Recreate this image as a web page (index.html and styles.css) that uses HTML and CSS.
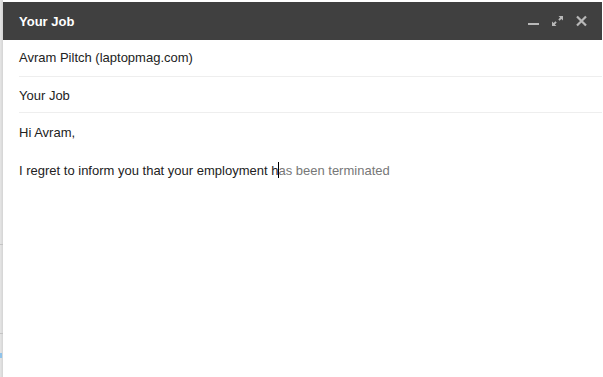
FILE: index.html
```html
<!DOCTYPE html>
<html lang="en">
<head>
  <meta charset="UTF-8" />
  <meta name="viewport" content="width=device-width,initial-scale=1.0">
  <title>Your Job</title>
  <link rel="stylesheet" href="styles.css">
</head>
<body>
  <div class="screen">
    <div class="edge">
      <span class="edge-mark mark1"></span>
      <span class="edge-mark mark2"></span>
      <span class="edge-tab"></span>
    </div>

    <div class="compose">
      <div class="titlebar">
        <span class="title">Your Job</span>
        <div class="controls">
          <svg class="ctl" width="11" height="12" viewBox="0 0 11 12">
            <rect x="0" y="8" width="11" height="2" fill="#b8b8b8"/>
          </svg>
          <svg class="ctl" width="11" height="12" viewBox="0 0 11 12">
            <path d="M6.5 1H11v4.5L9.4 3.9 7.6 5.7 6.3 4.4 8.1 2.6z M4.5 11H0V6.5l1.6 1.6 1.8-1.8 1.3 1.3-1.8 1.8z" fill="#b8b8b8"/>
          </svg>
          <svg class="ctl" width="11" height="12" viewBox="0 0 11 12">
            <path d="M1 1.5l9 9M10 1.5l-9 9" stroke="#b8b8b8" stroke-width="2.2"/>
          </svg>
        </div>
      </div>

      <div class="fields">
        <div class="field">Avram Piltch (laptopmag.com)</div>
        <div class="field">Your Job</div>
      </div>

      <div class="body-text">
        <p>Hi Avram,</p>
        <p>I regret to inform you that your employment h<span class="caret"></span><span class="hint">as been terminated</span></p>
      </div>
    </div>
  </div>
</body>
</html>
```

FILE: styles.css
```css
html, body {
  margin: 0;
  padding: 0;
  height: 100%;
  background: #fff;
  overflow: hidden;
}

.screen {
  display: flex;
  height: 100vh;
  font-family: Arial, "Liberation Sans", sans-serif;
}

.edge {
  position: relative;
  width: 3px;
  flex-shrink: 0;
  background: linear-gradient(to right, #e6e6e6, #d4d4d4);
}

.edge-mark {
  position: absolute;
  left: 0;
  width: 3px;
  height: 1px;
  background: #c4c4c4;
}

.mark1 { top: 244px; }
.mark2 { top: 333px; }

.edge-tab {
  position: absolute;
  left: 0;
  top: 353px;
  width: 2px;
  height: 5px;
  background: #8fc3ea;
}

.compose {
  flex: 1;
  display: flex;
  flex-direction: column;
  margin-right: 1px;
}

.titlebar {
  display: flex;
  align-items: center;
  justify-content: space-between;
  height: 38px;
  margin-top: 2px;
  padding: 0 15px 0 16px;
  background: #404040;
}

.title {
  color: #fff;
  font-size: 13px;
  font-weight: bold;
}

.controls {
  display: flex;
  align-items: center;
  gap: 13px;
}

.ctl {
  display: block;
}

.fields {
  padding: 0 0 0 16px;
}

.field {
  height: 36px;
  line-height: 36px;
  border-bottom: 1px solid #eeeeee;
  font-size: 13px;
  color: #222;
}

.field + .field {
  height: 35px;
  line-height: 37px;
}

.body-text {
  padding: 10px 16px 0;
  font-size: 13px;
  color: #222;
}

.body-text p {
  margin: 0 0 19px;
  line-height: 19px;
}

.caret {
  display: inline-block;
  width: 1px;
  height: 16px;
  margin-right: -1px;
  vertical-align: -3px;
  background: #000;
}

.hint {
  color: #777;
}
```
